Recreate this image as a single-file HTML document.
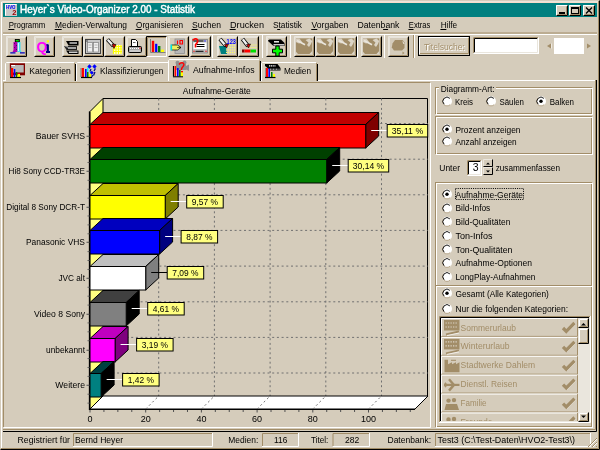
<!DOCTYPE html>
<html><head><meta charset="utf-8"><style>html,body{margin:0;padding:0;background:#D5CCBB;overflow:hidden}svg{display:block;will-change:transform}text{font-family:"Liberation Sans",sans-serif}</style></head>
<body><svg width="600" height="450" viewBox="0 0 600 450" font-family="Liberation Sans, sans-serif">
<rect x="0" y="0" width="600" height="450" fill="#D5CCBB" />
<path d="M1.5,449V2H598" stroke="#FFFFFF" fill="none"/>
<path d="M2,2.5H598" stroke="#F6DECB" fill="none"/>
<path d="M.5,449.5H599.5V.5" stroke="#000000" fill="none"/>
<path d="M1,448.5H598.5V1" stroke="#A28D68" fill="none"/>
<rect x="3" y="3" width="594" height="14" fill="#008080" />
<rect x="5" y="4" width="12" height="12" fill="#C8C8C8" />
<path d="M5.5,15.5V4.5H16.5" stroke="#fff" fill="none"/>
<text x="6" y="8.7" font-size="5" fill="#0000FF" text-anchor="start" font-weight="bold" textLength="9.5" lengthAdjust="spacingAndGlyphs" >HVO</text>
<text x="12.3" y="15.3" font-size="7.5" fill="#A00000" text-anchor="start" font-weight="bold" >2</text>
<text x="20" y="12.8" font-size="10.5" fill="#fff" text-anchor="start" font-weight="normal" textLength="175" lengthAdjust="spacingAndGlyphs" stroke="#fff" stroke-width=".45">Heyer`s Video-Organizer 2.00 - Statistik</text>
<rect x="556" y="5" width="12" height="11" fill="#D5CCBB" />
<path d="M556.5,15.5V5.5H567.5" stroke="#FFFFFF" fill="none"/>
<path d="M556.5,15.5H567.5V5.5" stroke="#000000" fill="none"/>
<path d="M557.5,14.5H566.5V6.5" stroke="#A28D68" fill="none"/>
<rect x="559" y="12" width="6" height="2" fill="#000000" />
<rect x="569" y="5" width="12" height="11" fill="#D5CCBB" />
<path d="M569.5,15.5V5.5H580.5" stroke="#FFFFFF" fill="none"/>
<path d="M569.5,15.5H580.5V5.5" stroke="#000000" fill="none"/>
<path d="M570.5,14.5H579.5V6.5" stroke="#A28D68" fill="none"/>
<rect x="571.5" y="7.5" width="7" height="6" stroke="#000" fill="none"/>
<rect x="571" y="7" width="8" height="2" fill="#000000" />
<rect x="583" y="5" width="12" height="11" fill="#D5CCBB" />
<path d="M583.5,15.5V5.5H594.5" stroke="#FFFFFF" fill="none"/>
<path d="M583.5,15.5H594.5V5.5" stroke="#000000" fill="none"/>
<path d="M584.5,14.5H593.5V6.5" stroke="#A28D68" fill="none"/>
<path d="M586,7.5L592,13.5M592,7.5L586,13.5" stroke="#000" stroke-width="1.4" fill="none"/>
<text x="8.7" y="28.3" font-size="9.5" fill="#000" text-anchor="start" font-weight="normal" textLength="36.6" lengthAdjust="spacingAndGlyphs" >Programm</text>
<line x1="8.399999999999999" y1="29.5" x2="14.399999999999999" y2="29.5" stroke="#000" stroke-width="1" />
<text x="55" y="28.3" font-size="9.5" fill="#000" text-anchor="start" font-weight="normal" textLength="72" lengthAdjust="spacingAndGlyphs" >Medien-Verwaltung</text>
<line x1="54.7" y1="29.5" x2="61.7" y2="29.5" stroke="#000" stroke-width="1" />
<text x="136" y="28.3" font-size="9.5" fill="#000" text-anchor="start" font-weight="normal" textLength="47" lengthAdjust="spacingAndGlyphs" >Organisieren</text>
<line x1="135.7" y1="29.5" x2="141.7" y2="29.5" stroke="#000" stroke-width="1" />
<text x="192" y="28.3" font-size="9.5" fill="#000" text-anchor="start" font-weight="normal" textLength="29" lengthAdjust="spacingAndGlyphs" >Suchen</text>
<line x1="191.7" y1="29.5" x2="197.7" y2="29.5" stroke="#000" stroke-width="1" />
<text x="230" y="28.3" font-size="9.5" fill="#000" text-anchor="start" font-weight="normal" textLength="34" lengthAdjust="spacingAndGlyphs" >Drucken</text>
<line x1="229.7" y1="29.5" x2="235.7" y2="29.5" stroke="#000" stroke-width="1" />
<text x="273" y="28.3" font-size="9.5" fill="#000" text-anchor="start" font-weight="normal" textLength="29" lengthAdjust="spacingAndGlyphs" >Statistik</text>
<line x1="277.2" y1="29.5" x2="280.2" y2="29.5" stroke="#000" stroke-width="1" />
<text x="311.6" y="28.3" font-size="9.5" fill="#000" text-anchor="start" font-weight="normal" textLength="36.7" lengthAdjust="spacingAndGlyphs" >Vorgaben</text>
<line x1="311.3" y1="29.5" x2="317.3" y2="29.5" stroke="#000" stroke-width="1" />
<text x="357.4" y="28.3" font-size="9.5" fill="#000" text-anchor="start" font-weight="normal" textLength="42" lengthAdjust="spacingAndGlyphs" >Datenbank</text>
<line x1="383.09999999999997" y1="29.5" x2="388.09999999999997" y2="29.5" stroke="#000" stroke-width="1" />
<text x="408.8" y="28.3" font-size="9.5" fill="#000" text-anchor="start" font-weight="normal" textLength="21.6" lengthAdjust="spacingAndGlyphs" >Extras</text>
<line x1="408.5" y1="29.5" x2="413.5" y2="29.5" stroke="#000" stroke-width="1" />
<text x="440.7" y="28.3" font-size="9.5" fill="#000" text-anchor="start" font-weight="normal" textLength="16.5" lengthAdjust="spacingAndGlyphs" >Hilfe</text>
<line x1="440.4" y1="29.5" x2="446.4" y2="29.5" stroke="#000" stroke-width="1" />
<line x1="3" y1="33" x2="597" y2="33" stroke="#A28D68" stroke-width="1" />
<line x1="3" y1="34.5" x2="597" y2="34.5" stroke="#FFFFFF" stroke-width="1" />
<rect x="6" y="36" width="21" height="21" fill="#D5CCBB" />
<path d="M6.5,56.5V36.5H26.5" stroke="#EAE6DD" fill="none"/>
<path d="M7.5,55.5V37.5H25.5" stroke="#F4F2EE" fill="none" opacity=".6"/>
<path d="M6.5,56.5H26.5V36.5" stroke="#000000" fill="none"/>
<path d="M7.5,55.5H25.5V37.5" stroke="#A28D68" fill="none"/>
<rect x="34" y="36" width="21" height="21" fill="#D5CCBB" />
<path d="M34.5,56.5V36.5H54.5" stroke="#EAE6DD" fill="none"/>
<path d="M35.5,55.5V37.5H53.5" stroke="#F4F2EE" fill="none" opacity=".6"/>
<path d="M34.5,56.5H54.5V36.5" stroke="#000000" fill="none"/>
<path d="M35.5,55.5H53.5V37.5" stroke="#A28D68" fill="none"/>
<rect x="62" y="36" width="21" height="21" fill="#D5CCBB" />
<path d="M62.5,56.5V36.5H82.5" stroke="#EAE6DD" fill="none"/>
<path d="M63.5,55.5V37.5H81.5" stroke="#F4F2EE" fill="none" opacity=".6"/>
<path d="M62.5,56.5H82.5V36.5" stroke="#000000" fill="none"/>
<path d="M63.5,55.5H81.5V37.5" stroke="#A28D68" fill="none"/>
<rect x="83" y="36" width="21" height="21" fill="#D5CCBB" />
<path d="M83.5,56.5V36.5H103.5" stroke="#EAE6DD" fill="none"/>
<path d="M84.5,55.5V37.5H102.5" stroke="#F4F2EE" fill="none" opacity=".6"/>
<path d="M83.5,56.5H103.5V36.5" stroke="#000000" fill="none"/>
<path d="M84.5,55.5H102.5V37.5" stroke="#A28D68" fill="none"/>
<rect x="104" y="36" width="21" height="21" fill="#D5CCBB" />
<path d="M104.5,56.5V36.5H124.5" stroke="#EAE6DD" fill="none"/>
<path d="M105.5,55.5V37.5H123.5" stroke="#F4F2EE" fill="none" opacity=".6"/>
<path d="M104.5,56.5H124.5V36.5" stroke="#000000" fill="none"/>
<path d="M105.5,55.5H123.5V37.5" stroke="#A28D68" fill="none"/>
<rect x="126" y="36" width="21" height="21" fill="#D5CCBB" />
<path d="M126.5,56.5V36.5H146.5" stroke="#EAE6DD" fill="none"/>
<path d="M127.5,55.5V37.5H145.5" stroke="#F4F2EE" fill="none" opacity=".6"/>
<path d="M126.5,56.5H146.5V36.5" stroke="#000000" fill="none"/>
<path d="M127.5,55.5H145.5V37.5" stroke="#A28D68" fill="none"/>
<rect x="146" y="36" width="21" height="21" fill="#D5CCBB" />
<path d="M146.5,57V36.5H167" stroke="#000000" fill="none"/>
<path d="M147.5,56V37.5H166" stroke="#A28D68" fill="none"/>
<path d="M146.5,56.5H166.5V36.5" stroke="#FFFFFF" fill="none"/>
<rect x="168" y="36" width="21" height="21" fill="#D5CCBB" />
<path d="M168.5,56.5V36.5H188.5" stroke="#EAE6DD" fill="none"/>
<path d="M169.5,55.5V37.5H187.5" stroke="#F4F2EE" fill="none" opacity=".6"/>
<path d="M168.5,56.5H188.5V36.5" stroke="#000000" fill="none"/>
<path d="M169.5,55.5H187.5V37.5" stroke="#A28D68" fill="none"/>
<rect x="190" y="36" width="21" height="21" fill="#D5CCBB" />
<path d="M190.5,56.5V36.5H210.5" stroke="#EAE6DD" fill="none"/>
<path d="M191.5,55.5V37.5H209.5" stroke="#F4F2EE" fill="none" opacity=".6"/>
<path d="M190.5,56.5H210.5V36.5" stroke="#000000" fill="none"/>
<path d="M191.5,55.5H209.5V37.5" stroke="#A28D68" fill="none"/>
<rect x="217" y="36" width="21" height="21" fill="#D5CCBB" />
<path d="M217.5,56.5V36.5H237.5" stroke="#EAE6DD" fill="none"/>
<path d="M218.5,55.5V37.5H236.5" stroke="#F4F2EE" fill="none" opacity=".6"/>
<path d="M217.5,56.5H237.5V36.5" stroke="#000000" fill="none"/>
<path d="M218.5,55.5H236.5V37.5" stroke="#A28D68" fill="none"/>
<rect x="238" y="36" width="21" height="21" fill="#D5CCBB" />
<path d="M238.5,56.5V36.5H258.5" stroke="#EAE6DD" fill="none"/>
<path d="M239.5,55.5V37.5H257.5" stroke="#F4F2EE" fill="none" opacity=".6"/>
<path d="M238.5,56.5H258.5V36.5" stroke="#000000" fill="none"/>
<path d="M239.5,55.5H257.5V37.5" stroke="#A28D68" fill="none"/>
<rect x="266" y="36" width="21" height="21" fill="#D5CCBB" />
<path d="M266.5,56.5V36.5H286.5" stroke="#EAE6DD" fill="none"/>
<path d="M267.5,55.5V37.5H285.5" stroke="#F4F2EE" fill="none" opacity=".6"/>
<path d="M266.5,56.5H286.5V36.5" stroke="#000000" fill="none"/>
<path d="M267.5,55.5H285.5V37.5" stroke="#A28D68" fill="none"/>
<rect x="294" y="36" width="21" height="21" fill="#D5CCBB" />
<path d="M294.5,56.5V36.5H314.5" stroke="#EAE6DD" fill="none"/>
<path d="M295.5,55.5V37.5H313.5" stroke="#F4F2EE" fill="none" opacity=".6"/>
<path d="M294.5,56.5H314.5V36.5" stroke="#000000" fill="none"/>
<path d="M295.5,55.5H313.5V37.5" stroke="#A28D68" fill="none"/>
<rect x="315" y="36" width="21" height="21" fill="#D5CCBB" />
<path d="M315.5,56.5V36.5H335.5" stroke="#EAE6DD" fill="none"/>
<path d="M316.5,55.5V37.5H334.5" stroke="#F4F2EE" fill="none" opacity=".6"/>
<path d="M315.5,56.5H335.5V36.5" stroke="#000000" fill="none"/>
<path d="M316.5,55.5H334.5V37.5" stroke="#A28D68" fill="none"/>
<rect x="336" y="36" width="21" height="21" fill="#D5CCBB" />
<path d="M336.5,56.5V36.5H356.5" stroke="#EAE6DD" fill="none"/>
<path d="M337.5,55.5V37.5H355.5" stroke="#F4F2EE" fill="none" opacity=".6"/>
<path d="M336.5,56.5H356.5V36.5" stroke="#000000" fill="none"/>
<path d="M337.5,55.5H355.5V37.5" stroke="#A28D68" fill="none"/>
<rect x="361" y="36" width="21" height="21" fill="#D5CCBB" />
<path d="M361.5,56.5V36.5H381.5" stroke="#EAE6DD" fill="none"/>
<path d="M362.5,55.5V37.5H380.5" stroke="#F4F2EE" fill="none" opacity=".6"/>
<path d="M361.5,56.5H381.5V36.5" stroke="#000000" fill="none"/>
<path d="M362.5,55.5H380.5V37.5" stroke="#A28D68" fill="none"/>
<rect x="388" y="36" width="21" height="21" fill="#D5CCBB" />
<path d="M388.5,56.5V36.5H408.5" stroke="#EAE6DD" fill="none"/>
<path d="M389.5,55.5V37.5H407.5" stroke="#F4F2EE" fill="none" opacity=".6"/>
<path d="M388.5,56.5H408.5V36.5" stroke="#000000" fill="none"/>
<path d="M389.5,55.5H407.5V37.5" stroke="#A28D68" fill="none"/>
<g transform="translate(6,36)"><rect x="9.3" y="3.5" width="4" height="2.4" fill="#00E000" stroke="#000" stroke-width=".9"/><path d="M7.5,6H11.5V16H6.5L7.5,14Z" fill="#B000B0"/><path d="M8,7h1v1h-1zM10,9h1v1h-1zM8,11h1v1h-1zM10,13h1v1h-1z" fill="#600060"/><path d="M11.5,6H14.5L14.5,14L15.5,16H11.5Z" fill="#40E0F0"/><path d="M12.5,7V15" stroke="#fff" stroke-width=".8"/><path d="M4.3,16.8H9.5M14,16.8H18.8" stroke="#0000C0" stroke-width="1.3"/></g>
<g transform="translate(34,36)"><text x="2.6" y="16" font-size="14.5" font-family="Liberation Serif" font-weight="bold" fill="#FF00FF" textLength="11" lengthAdjust="spacingAndGlyphs">Q</text><path d="M13.8,8.5V15.8M12,16H16" stroke="#000080" stroke-width="2.2"/><path d="M12.3,8.8H14" stroke="#000080" stroke-width="1.2"/><rect x="12.8" y="4.3" width="2.2" height="2" fill="#FFFF00"/></g>
<g transform="translate(62,36)"><path d="M4,5H16.5V9.5H6.5Z" fill="#000"/><path d="M7.5,7H15" stroke="#fff" stroke-width="1.2"/><path d="M2,10H15V14H4.5Z" fill="#202020"/><path d="M2,10H6V12Z" fill="#909090"/><path d="M6,12H14" stroke="#fff" stroke-width="1.2"/><path d="M4,14.5H16.5V18H6.5Z" fill="#000"/><path d="M7,16.2H15.5" stroke="#fff" stroke-width="1.2"/></g>
<g transform="translate(83,36)"><rect x="2.5" y="3.5" width="15" height="14" fill="#C8C8C8" stroke="#404040" stroke-width="1"/><path d="M3,5H5M6,3.5H15" stroke="#404040" stroke-width="1"/><rect x="4.5" y="6.5" width="5" height="9.5" fill="#F0F0F0" stroke="#808080" stroke-width=".7"/><rect x="10.5" y="6.5" width="5" height="9.5" fill="#F0F0F0" stroke="#808080" stroke-width=".7"/><path d="M5.5,9H8.5M5.5,11.5H8.5M11.5,9H14.5M11.5,11.5H14.5" stroke="#909090" stroke-width=".6"/></g>
<g transform="translate(104,36)"><rect x="9" y="9" width="9" height="9" fill="#FFFFE0"/><path d="M9.5,9V18M12,9V18M14.5,9V18M17,9V18M9,10.5H18M9,13H18M9,15.5H18" stroke="#FFFF00" stroke-width="1.2"/><path d="M3.5,3.5L9.5,10" stroke="#000" stroke-width="4"/><path d="M3.8,3.8L9,9.5" stroke="#F0F0F0" stroke-width="2.4"/><path d="M8,8L12,8.5L10,12.5Z" fill="#E00000" stroke="#000" stroke-width=".6"/></g>
<g transform="translate(125,36)"><path d="M6.5,3.5H10.5L12.5,5.5V10.5H6.5Z" fill="#fff" stroke="#000" stroke-width="1"/><path d="M8,6.5H10.5" stroke="#000" stroke-width=".6"/><rect x="3.5" y="10.5" width="13" height="6" rx="1" fill="#A8A8A8" stroke="#000" stroke-width="1"/><path d="M5,12.5H15" stroke="#fff" stroke-width="1" stroke-dasharray="1 1"/><path d="M5,15H15" stroke="#fff" stroke-width=".8"/><rect x="14.5" y="11.5" width="1.2" height="1.2" fill="#FF0000"/></g>
<g transform="translate(147,36)"><path d="M3.5,3V16.5H18.5" stroke="#808080" stroke-width="1" fill="none"/><rect x="4.8" y="4.8" width="2.4" height="11.2" fill="#FF0000"/><rect x="8.1" y="7.8" width="2.2" height="8.2" fill="#0000FF"/><rect x="11" y="10" width="2.4" height="6" fill="#008000"/><rect x="14" y="13.6" width="3" height="2.4" fill="#FFFF00"/></g>
<g transform="translate(168,36)"><rect x="7" y="3" width="9.5" height="14.5" fill="#B8B8B8" stroke="#909090" stroke-width=".8"/><path d="M9.5,4.5V8M12,4.5H14.5V8H12Z" stroke="#FF0000" stroke-width="1.2" fill="none"/><path d="M3.5,9H9.5L13,11.5L9.5,14H3.5Z" fill="#F0F060" stroke="#000" stroke-width=".7"/><rect x="2.5" y="8.5" width="1.6" height="6" fill="#00E0E0"/><path d="M9,11.5H13" stroke="#000" stroke-width=".6"/></g>
<g transform="translate(189.5,36)"><rect x="3" y="3.5" width="15" height="13.5" fill="#C0C0C0" stroke="#808080" stroke-width=".8"/><rect x="4" y="6.5" width="13" height="6.5" fill="#fff"/><path d="M4,5H14M7,8.5H15M7,10.5H15M6,15.3H14" stroke="#000" stroke-width="1"/><circle cx="15.5" cy="5" r=".7" fill="#0000FF"/><circle cx="16.5" cy="15.3" r=".7" fill="#FF0000"/><circle cx="4.5" cy="15.3" r=".7" fill="#FF0000"/><path d="M3.3,4.5Q6,1.5 8,3.8Q9,6 6,8.5V11.5" stroke="#FF0000" stroke-width="1.6" fill="none"/></g>
<line x1="212.5" y1="35" x2="212.5" y2="58" stroke="#FFFFFF" stroke-width="1" />
<g transform="translate(217,36)"><path d="M2,10H9L10,18H4Z" fill="#008080"/><path d="M9,9H18M9,11.5H18M9,14H18M9,16.5H18" stroke="#FFFF60" stroke-width="1.1" stroke-dasharray="1 1"/><path d="M3,3L9,10" stroke="#000" stroke-width="4"/><path d="M3.3,3.3L8.5,9.5" stroke="#F0F0F0" stroke-width="2.4"/><path d="M7.5,8.5L11.5,8L9.5,12Z" fill="#E00000" stroke="#000" stroke-width=".6"/><text x="9.5" y="8" font-size="7" fill="#0000FF" font-weight="bold" textLength="9.5" lengthAdjust="spacingAndGlyphs">123</text></g>
<g transform="translate(238.5,36)"><path d="M10,9H18.5M10,11.5H18.5" stroke="#FFFF60" stroke-width="1.1" stroke-dasharray="1 1"/><rect x="3.5" y="13.5" width="2.5" height="3" fill="#800000"/><rect x="6" y="13.5" width="6" height="3" fill="#FF0000"/><rect x="12" y="13.5" width="5.5" height="3" fill="#00E000"/><path d="M4,3L9.5,10" stroke="#000" stroke-width="4"/><path d="M4.3,3.3L9,9.5" stroke="#F0F0F0" stroke-width="2.4"/><path d="M8,8.5L12,8L10,12Z" fill="#E00000" stroke="#000" stroke-width=".6"/></g>
<line x1="262.5" y1="35" x2="262.5" y2="58" stroke="#FFFFFF" stroke-width="1" />
<g transform="translate(266,36)"><path d="M2,4.5L3.5,3.5H15L18.5,7V10H7.5L2,5Z" fill="#000"/><path d="M8,5.8H13" stroke="#fff" stroke-width="1.4"/><path d="M7.5,8.8H18" stroke="#E0E0E0" stroke-width="1.4"/><path d="M9.8,10H13.2V13.2H16.5V16.8H13.2V20H9.8V16.8H6.5V13.2H9.8Z" fill="#00FF00" stroke="#000" stroke-width="1"/></g>
<line x1="290.5" y1="35" x2="290.5" y2="58" stroke="#FFFFFF" stroke-width="1" />
<g transform="translate(294,36)"><rect x="1.8" y="2.4" width="16.4" height="15.6" fill="#A28D68"/><path d="M1.8,2.4H5.5L8.5,6.5L5,7.5L1.8,6Z" fill="#EAE6DD" opacity=".75"/><path d="M3,4.5L11,8.8" stroke="#EAE6DD" stroke-width="1.6"/><path d="M11.5,4L15.5,2.4L18.2,5L17,8L15,11L13,9L14.5,6.5Z" fill="#EAE6DD" opacity=".8"/><path d="M1.8,18V15.5L4,18ZM18.2,18V15L15.5,18Z" fill="#EAE6DD" opacity=".8"/></g>
<g transform="translate(315,36)"><rect x="1.8" y="2.4" width="16.4" height="15.6" fill="#A28D68"/><path d="M1.8,2.4H5.5L8.5,6.5L5,7.5L1.8,6Z" fill="#EAE6DD" opacity=".75"/><path d="M3,4.5L11,8.8" stroke="#EAE6DD" stroke-width="1.6"/><path d="M11.5,4L15.5,2.4L18.2,5L17,8L15,11L13,9L14.5,6.5Z" fill="#EAE6DD" opacity=".8"/><path d="M1.8,18V15.5L4,18ZM18.2,18V15L15.5,18Z" fill="#EAE6DD" opacity=".8"/></g>
<g transform="translate(336,36)"><rect x="1.8" y="2.4" width="16.4" height="15.6" fill="#A28D68"/><path d="M1.8,2.4H5.5L8.5,6.5L5,7.5L1.8,6Z" fill="#EAE6DD" opacity=".75"/><path d="M3,4.5L11,8.8" stroke="#EAE6DD" stroke-width="1.6"/><path d="M11.5,4L15.5,2.4L18.2,5L17,8L15,11L13,9L14.5,6.5Z" fill="#EAE6DD" opacity=".8"/><path d="M1.8,18V15.5L4,18ZM18.2,18V15L15.5,18Z" fill="#EAE6DD" opacity=".8"/></g>
<g transform="translate(361,36)"><rect x="1.8" y="2.4" width="16.4" height="15.6" fill="#A28D68"/><path d="M1.8,2.4H5.5L8.5,6.5L5,7.5L1.8,6Z" fill="#EAE6DD" opacity=".75"/><path d="M3,4.5L11,8.8" stroke="#EAE6DD" stroke-width="1.6"/><path d="M11.5,4L15.5,2.4L18.2,5L17,8L15,11L13,9L14.5,6.5Z" fill="#EAE6DD" opacity=".8"/><path d="M1.8,18V15.5L4,18ZM18.2,18V15L15.5,18Z" fill="#EAE6DD" opacity=".8"/></g>
<line x1="357.5" y1="35" x2="357.5" y2="58" stroke="#FFFFFF" stroke-width="1" />
<line x1="384.5" y1="35" x2="384.5" y2="58" stroke="#FFFFFF" stroke-width="1" />
<g transform="translate(388,36)"><path d="M7,4H14.5L16.5,6.5V12L14,14.5H6L3.8,11.5L4.5,7.5Z" fill="#A28D68"/><path d="M14.5,15.5L16.5,17L14.5,18.5Z" fill="#A28D68"/><path d="M14.8,5.5L16,8" stroke="#EAE6DD" stroke-width="1"/></g>
<line x1="413.5" y1="35" x2="413.5" y2="58" stroke="#A28D68" stroke-width="1" />
<line x1="414.5" y1="35" x2="414.5" y2="58" stroke="#FFFFFF" stroke-width="1" />
<rect x="418" y="36" width="52" height="20" fill="#000000" />
<rect x="419" y="37" width="50" height="18" fill="#D5CCBB" />
<path d="M419.5,54V37.5H468" stroke="#FFFFFF" fill="none"/>
<path d="M420,53.5H468.5V38" stroke="#A28D68" fill="none"/>
<text x="425" y="50.5" font-size="9.5" fill="#FFFFFF" text-anchor="start" font-weight="normal" textLength="41" lengthAdjust="spacingAndGlyphs" >Titelsuche:</text>
<text x="424" y="49.5" font-size="9.5" fill="#A28D68" text-anchor="start" font-weight="normal" textLength="41" lengthAdjust="spacingAndGlyphs" >Titelsuche:</text>
<rect x="473" y="37" width="66" height="17" fill="#FFFFFF" />
<path d="M473.5,53.5V37.5H538.5" stroke="#A28D68" fill="none"/>
<path d="M473.5,53.5H538.5V37.5" stroke="#FFFFFF" fill="none"/>
<path d="M474.5,52.5V38.5H537.5" stroke="#000000" fill="none"/>
<path d="M474.5,52.5H537.5V38.5" stroke="#EAE6DD" fill="none"/>
<path d="M551,43.5L547,46L551,48.5Z" fill="#A28D68"/><path d="M551.5,43.5V48.5" stroke="#fff" stroke-width=".6"/>
<path d="M587,43.5L591,46L587,48.5Z" fill="#A28D68"/>
<rect x="554" y="38" width="30" height="16" fill="#FFFFFF" />
<path d="M3,80.5H596" stroke="#FFFFFF" fill="none"/>
<rect x="5" y="62" width="71" height="19" fill="#D5CCBB" />
<path d="M5.5,81V63.5L6.5,62.5H74" stroke="#FFFFFF" fill="none"/>
<path d="M74.5,63V81" stroke="#A28D68" fill="none"/>
<path d="M75.5,64V81" stroke="#000000" fill="none"/>
<text x="29.3" y="74" font-size="9.5" fill="#000" text-anchor="start" font-weight="normal" textLength="41.4" lengthAdjust="spacingAndGlyphs" >Kategorien</text>
<rect x="9.8" y="63.3" width="15.2" height="12" fill="#800000"/><rect x="11.2" y="65" width="12.5" height="7.5" fill="#B8B8B8"/><path d="M11.2,65.5H15" stroke="#fff" stroke-width="1"/><rect x="10" y="68" width="1" height="9" fill="#404040"/><rect x="11" y="68" width="2.2" height="9" fill="#FF0000"/><rect x="13.8" y="69" width="1.5" height="8" fill="#0000FF"/><rect x="16" y="72" width="1.3" height="5" fill="#008000"/><rect x="17.6" y="74" width="2.4" height="3" fill="#FFFF00"/><rect x="17.6" y="73" width="2.4" height="1" fill="#E00000"/><path d="M10,77.5H21" stroke="#000" stroke-width="1.2"/>
<rect x="76" y="62" width="94" height="19" fill="#D5CCBB" />
<path d="M76.5,81V63.5L77.5,62.5H168" stroke="#FFFFFF" fill="none"/>
<path d="M168.5,63V81" stroke="#A28D68" fill="none"/>
<path d="M169.5,64V81" stroke="#000000" fill="none"/>
<text x="100" y="74" font-size="9.5" fill="#000" text-anchor="start" font-weight="normal" textLength="63.5" lengthAdjust="spacingAndGlyphs" >Klassifizierungen</text>
<rect x="80.4" y="68" width="1.1" height="9" fill="#808080"/><rect x="81.7" y="68" width="2.3" height="9" fill="#FF0000"/><rect x="85" y="69" width="1.6" height="8" fill="#0000FF"/><rect x="87" y="67.5" width="1.4" height="4.5" fill="#00FFFF"/><rect x="87" y="72" width="1.5" height="5" fill="#008000"/><rect x="89" y="74" width="2" height="3" fill="#FFFF00"/><path d="M81,77.5H92" stroke="#000" stroke-width="1.2"/><path d="M89.5,64.3L91.7,66.5L89.5,68.7L87.3,66.5Z M94.5,64.3L96.7,66.5L94.5,68.7L92.3,66.5Z M91.8,70.8L93.8,72.8L91.8,74.8L89.8,72.8Z" fill="#0000FF"/><path d="M91,69L90,71.5M95.5,68.5L94,71M95,72L93.5,75.5M92.5,75L91.8,77" stroke="#000080" stroke-width="1.2"/>
<rect x="261" y="62" width="57" height="19" fill="#D5CCBB" />
<path d="M261.5,81V63.5L262.5,62.5H316" stroke="#FFFFFF" fill="none"/>
<path d="M316.5,63V81" stroke="#A28D68" fill="none"/>
<path d="M317.5,64V81" stroke="#000000" fill="none"/>
<text x="284" y="74" font-size="9.5" fill="#000" text-anchor="start" font-weight="normal" textLength="27" lengthAdjust="spacingAndGlyphs" >Medien</text>
<path d="M265,64H277.5L280.5,68V70.5H270.5L265,66Z" fill="#000"/><path d="M269,65.8H275.5" stroke="#fff" stroke-width="1.2" stroke-dasharray="1.2 .6"/><path d="M270,69.2H279.5" stroke="#E0E0E0" stroke-width="1" stroke-dasharray="1 .5"/><rect x="265" y="68" width="1" height="9" fill="#909090"/><rect x="266" y="68" width="2" height="9" fill="#FF0000"/><rect x="268.4" y="68.5" width="1.6" height="8.5" fill="#0000FF"/><rect x="271" y="72" width="1.5" height="5" fill="#008000"/><rect x="273" y="74" width="2" height="3" fill="#FFFF00"/><path d="M265,77.5H275.5" stroke="#000" stroke-width="1.2"/>
<rect x="168" y="59" width="93" height="23" fill="#D5CCBB" />
<path d="M168.5,81V60.5L169.5,59.5H259" stroke="#FFFFFF" fill="none"/>
<path d="M259.5,60.5V81" stroke="#A28D68" fill="none"/>
<path d="M260.5,61V81" stroke="#000000" fill="none"/>
<text x="193" y="73" font-size="9.5" fill="#000" text-anchor="start" font-weight="normal" textLength="61.5" lengthAdjust="spacingAndGlyphs" >Aufnahme-Infos</text>
<circle cx="177.5" cy="62.8" r="2" fill="#909090"/><circle cx="184.5" cy="62.5" r="2" fill="#909090"/><rect x="176" y="62.5" width="10" height="7.5" fill="#909090"/><path d="M186,66L189,64.5V71L186,69.5Z" fill="#909090"/><rect x="172.9" y="66" width="1.1" height="10.5" fill="#000"/><rect x="174.5" y="66" width="1.6" height="10.5" fill="#FF0000"/><rect x="177" y="68" width="1.6" height="8.5" fill="#0000FF"/><rect x="179" y="70" width="1.6" height="6.5" fill="#008000"/><rect x="181" y="71" width="2" height="5.5" fill="#FFFF00"/><rect x="181" y="71" width="2" height="1.3" fill="#FF0000"/><path d="M173,76.8H183" stroke="#000" stroke-width="1"/><path d="M179,64.5Q180.5,62.3 183,63Q184.8,64.3 183,66.5Q181.5,68 181.3,70" stroke="#FF0000" stroke-width="1.4" fill="none"/>
<line x1="169" y1="80.5" x2="259" y2="80.5" stroke="#D5CCBB" stroke-width="1" />
<path d="M3,429.5H595.5V80" stroke="#A28D68" fill="none"/>
<path d="M3,431.5H596.5V80" stroke="#000000" fill="none"/>
<path d="M3.5,427V82.5H431" stroke="#A28D68" fill="none"/>
<path d="M3.5,427.5H430.5V82.5" stroke="#FFFFFF" fill="none"/>
<text x="216.8" y="94" font-size="9" fill="#000" text-anchor="middle" font-weight="normal" textLength="68" lengthAdjust="spacingAndGlyphs" >Aufnahme-Geräte</text>
<path d="M103.0,98.5H427.5V396.0" stroke="#000" fill="none" stroke-width="1"/>
<line x1="158.7" y1="98.5" x2="158.7" y2="396.0" stroke="#707070" stroke-width="1" stroke-dasharray="2 2.7"/>
<line x1="214.4" y1="98.5" x2="214.4" y2="396.0" stroke="#707070" stroke-width="1" stroke-dasharray="2 2.7"/>
<line x1="270.1" y1="98.5" x2="270.1" y2="396.0" stroke="#707070" stroke-width="1" stroke-dasharray="2 2.7"/>
<line x1="325.8" y1="98.5" x2="325.8" y2="396.0" stroke="#707070" stroke-width="1" stroke-dasharray="2 2.7"/>
<line x1="381.5" y1="98.5" x2="381.5" y2="396.0" stroke="#707070" stroke-width="1" stroke-dasharray="2 2.7"/>
<line x1="103.0" y1="123.5" x2="428.0" y2="123.5" stroke="#707070" stroke-width="1" stroke-dasharray="2 2.7"/>
<line x1="103.0" y1="159.2" x2="428.0" y2="159.2" stroke="#707070" stroke-width="1" stroke-dasharray="2 2.7"/>
<line x1="103.0" y1="194.8" x2="428.0" y2="194.8" stroke="#707070" stroke-width="1" stroke-dasharray="2 2.7"/>
<line x1="103.0" y1="230.4" x2="428.0" y2="230.4" stroke="#707070" stroke-width="1" stroke-dasharray="2 2.7"/>
<line x1="103.0" y1="266.1" x2="428.0" y2="266.1" stroke="#707070" stroke-width="1" stroke-dasharray="2 2.7"/>
<line x1="103.0" y1="301.8" x2="428.0" y2="301.8" stroke="#707070" stroke-width="1" stroke-dasharray="2 2.7"/>
<line x1="103.0" y1="337.4" x2="428.0" y2="337.4" stroke="#707070" stroke-width="1" stroke-dasharray="2 2.7"/>
<line x1="103.0" y1="373.0" x2="428.0" y2="373.0" stroke="#707070" stroke-width="1" stroke-dasharray="2 2.7"/>
<path d="M90.0,409.0H415.0L428.0,396.0H103.0Z" fill="#fff" stroke="#000" stroke-width="1"/>
<line x1="90.0" y1="409.5" x2="415.0" y2="409.5" stroke="#000" stroke-width="1" />
<line x1="145.7" y1="409.0" x2="158.7" y2="396.0" stroke="#707070" stroke-width="1" stroke-dasharray="2 2.7"/>
<line x1="201.4" y1="409.0" x2="214.4" y2="396.0" stroke="#707070" stroke-width="1" stroke-dasharray="2 2.7"/>
<line x1="257.1" y1="409.0" x2="270.1" y2="396.0" stroke="#707070" stroke-width="1" stroke-dasharray="2 2.7"/>
<line x1="312.8" y1="409.0" x2="325.8" y2="396.0" stroke="#707070" stroke-width="1" stroke-dasharray="2 2.7"/>
<line x1="368.5" y1="409.0" x2="381.5" y2="396.0" stroke="#707070" stroke-width="1" stroke-dasharray="2 2.7"/>
<path d="M90.0,409.0V111.5L103.0,98.5V396.0Z" fill="#FFFF80" stroke="#000" stroke-width="1"/>
<line x1="89.5" y1="111.5" x2="89.5" y2="410.0" stroke="#000" stroke-width="1.3" />
<path d="M90.0,124.5H365.7L378.7,112.5H103.0Z" fill="#BF0000" stroke="#000" stroke-width="1" stroke-linejoin="round"/>
<path d="M365.7,124.5L378.7,112.5V136.0L365.7,148.0Z" fill="#7F0000" stroke="#000" stroke-width="1" stroke-linejoin="round"/>
<rect x="90.0" y="124.5" width="275.7" height="23.5" fill="#FF0000" stroke="#000" stroke-width="1"/>
<line x1="86.5" y1="136.25" x2="89.5" y2="136.25" stroke="#505050" stroke-width="1" />
<text x="85" y="139.45" font-size="9" fill="#000" text-anchor="end" font-weight="normal" textLength="49.2" lengthAdjust="spacingAndGlyphs" >Bauer SVHS</text>
<path d="M90.0,159.5H326.7L339.7,147.5H103.0Z" fill="#004000" stroke="#000" stroke-width="1" stroke-linejoin="round"/>
<path d="M326.7,159.5L339.7,147.5V171.0L326.7,183.0Z" fill="#000000" stroke="#000" stroke-width="1" stroke-linejoin="round"/>
<rect x="90.0" y="159.5" width="236.7" height="23.5" fill="#008000" stroke="#000" stroke-width="1"/>
<line x1="86.5" y1="171.25" x2="89.5" y2="171.25" stroke="#505050" stroke-width="1" />
<text x="85" y="174.45" font-size="9" fill="#000" text-anchor="end" font-weight="normal" textLength="76.4" lengthAdjust="spacingAndGlyphs" >Hi8 Sony CCD-TR3E</text>
<path d="M90.0,195.5H165.2L178.2,183.5H103.0Z" fill="#BFBF00" stroke="#000" stroke-width="1" stroke-linejoin="round"/>
<path d="M165.2,195.5L178.2,183.5V207.0L165.2,219.0Z" fill="#7F7F00" stroke="#000" stroke-width="1" stroke-linejoin="round"/>
<rect x="90.0" y="195.5" width="75.2" height="23.5" fill="#FFFF00" stroke="#000" stroke-width="1"/>
<line x1="86.5" y1="207.25" x2="89.5" y2="207.25" stroke="#505050" stroke-width="1" />
<text x="85" y="210.45" font-size="9" fill="#000" text-anchor="end" font-weight="normal" textLength="78.7" lengthAdjust="spacingAndGlyphs" >Digital 8 Sony DCR-T</text>
<path d="M90.0,230.5H159.6L172.6,218.5H103.0Z" fill="#0000BF" stroke="#000" stroke-width="1" stroke-linejoin="round"/>
<path d="M159.6,230.5L172.6,218.5V242.0L159.6,254.0Z" fill="#00007F" stroke="#000" stroke-width="1" stroke-linejoin="round"/>
<rect x="90.0" y="230.5" width="69.6" height="23.5" fill="#0000FF" stroke="#000" stroke-width="1"/>
<line x1="86.5" y1="242.25" x2="89.5" y2="242.25" stroke="#505050" stroke-width="1" />
<text x="85" y="245.45" font-size="9" fill="#000" text-anchor="end" font-weight="normal" textLength="59" lengthAdjust="spacingAndGlyphs" >Panasonic VHS</text>
<path d="M90.0,266.5H145.7L158.7,254.5H103.0Z" fill="#BFBFBF" stroke="#000" stroke-width="1" stroke-linejoin="round"/>
<path d="M145.7,266.5L158.7,254.5V278.0L145.7,290.0Z" fill="#7F7F7F" stroke="#000" stroke-width="1" stroke-linejoin="round"/>
<rect x="90.0" y="266.5" width="55.7" height="23.5" fill="#FFFFFF" stroke="#000" stroke-width="1"/>
<line x1="86.5" y1="278.25" x2="89.5" y2="278.25" stroke="#505050" stroke-width="1" />
<text x="85" y="281.45" font-size="9" fill="#000" text-anchor="end" font-weight="normal" textLength="26.6" lengthAdjust="spacingAndGlyphs" >JVC alt</text>
<path d="M90.0,302.5H126.2L139.2,290.5H103.0Z" fill="#404040" stroke="#000" stroke-width="1" stroke-linejoin="round"/>
<path d="M126.2,302.5L139.2,290.5V314.0L126.2,326.0Z" fill="#000000" stroke="#000" stroke-width="1" stroke-linejoin="round"/>
<rect x="90.0" y="302.5" width="36.2" height="23.5" fill="#808080" stroke="#000" stroke-width="1"/>
<line x1="86.5" y1="314.25" x2="89.5" y2="314.25" stroke="#505050" stroke-width="1" />
<text x="85" y="317.45" font-size="9" fill="#000" text-anchor="end" font-weight="normal" textLength="51" lengthAdjust="spacingAndGlyphs" >Video 8 Sony</text>
<path d="M90.0,338.5H115.1L128.1,326.5H103.0Z" fill="#BF00BF" stroke="#000" stroke-width="1" stroke-linejoin="round"/>
<path d="M115.1,338.5L128.1,326.5V350.0L115.1,362.0Z" fill="#7F007F" stroke="#000" stroke-width="1" stroke-linejoin="round"/>
<rect x="90.0" y="338.5" width="25.1" height="23.5" fill="#FF00FF" stroke="#000" stroke-width="1"/>
<line x1="86.5" y1="350.25" x2="89.5" y2="350.25" stroke="#505050" stroke-width="1" />
<text x="85" y="353.45" font-size="9" fill="#000" text-anchor="end" font-weight="normal" textLength="39" lengthAdjust="spacingAndGlyphs" >unbekannt</text>
<path d="M90.0,373.5H101.1L114.1,361.5H103.0Z" fill="#004040" stroke="#000" stroke-width="1" stroke-linejoin="round"/>
<path d="M101.1,373.5L114.1,361.5V385.0L101.1,397.0Z" fill="#000000" stroke="#000" stroke-width="1" stroke-linejoin="round"/>
<rect x="90.0" y="373.5" width="11.1" height="23.5" fill="#008080" stroke="#000" stroke-width="1"/>
<line x1="86.5" y1="385.25" x2="89.5" y2="385.25" stroke="#505050" stroke-width="1" />
<text x="85" y="388.45" font-size="9" fill="#000" text-anchor="end" font-weight="normal" textLength="29.7" lengthAdjust="spacingAndGlyphs" >Weitere</text>
<line x1="371.21500000000003" y1="130.5" x2="387.21500000000003" y2="130.5" stroke="#fff" stroke-width="1" />
<rect x="387.2" y="124.5" width="40.5" height="12.5" fill="#FFFF80" stroke="#000" stroke-width="1"/>
<text x="407.46500000000003" y="134.3" font-size="9" fill="#000" text-anchor="middle" font-weight="normal" textLength="31.4" lengthAdjust="spacingAndGlyphs" >35,11 %</text>
<line x1="332.225" y1="165.5" x2="348.225" y2="165.5" stroke="#fff" stroke-width="1" />
<rect x="348.2" y="159.5" width="40.5" height="12.5" fill="#FFFF80" stroke="#000" stroke-width="1"/>
<text x="368.475" y="169.3" font-size="9" fill="#000" text-anchor="middle" font-weight="normal" textLength="31.4" lengthAdjust="spacingAndGlyphs" >30,14 %</text>
<line x1="170.695" y1="201.5" x2="186.695" y2="201.5" stroke="#fff" stroke-width="1" />
<rect x="186.7" y="195.5" width="36.5" height="12.5" fill="#FFFF80" stroke="#000" stroke-width="1"/>
<text x="204.945" y="205.3" font-size="9" fill="#000" text-anchor="middle" font-weight="normal" textLength="26.2" lengthAdjust="spacingAndGlyphs" >9,57 %</text>
<line x1="165.125" y1="236.5" x2="181.125" y2="236.5" stroke="#fff" stroke-width="1" />
<rect x="181.1" y="230.5" width="36.5" height="12.5" fill="#FFFF80" stroke="#000" stroke-width="1"/>
<text x="199.375" y="240.3" font-size="9" fill="#000" text-anchor="middle" font-weight="normal" textLength="26.2" lengthAdjust="spacingAndGlyphs" >8,87 %</text>
<line x1="151.2" y1="272.5" x2="167.2" y2="272.5" stroke="#000" stroke-width="1" />
<rect x="167.2" y="266.5" width="36.5" height="12.5" fill="#FFFF80" stroke="#000" stroke-width="1"/>
<text x="185.45" y="276.3" font-size="9" fill="#000" text-anchor="middle" font-weight="normal" textLength="26.2" lengthAdjust="spacingAndGlyphs" >7,09 %</text>
<line x1="131.70499999999998" y1="308.5" x2="147.70499999999998" y2="308.5" stroke="#fff" stroke-width="1" />
<rect x="147.7" y="302.5" width="36.5" height="12.5" fill="#FFFF80" stroke="#000" stroke-width="1"/>
<text x="165.95499999999998" y="312.3" font-size="9" fill="#000" text-anchor="middle" font-weight="normal" textLength="26.2" lengthAdjust="spacingAndGlyphs" >4,61 %</text>
<line x1="120.565" y1="344.5" x2="136.565" y2="344.5" stroke="#fff" stroke-width="1" />
<rect x="136.6" y="338.5" width="36.5" height="12.5" fill="#FFFF80" stroke="#000" stroke-width="1"/>
<text x="154.815" y="348.3" font-size="9" fill="#000" text-anchor="middle" font-weight="normal" textLength="26.2" lengthAdjust="spacingAndGlyphs" >3,19 %</text>
<line x1="106.64" y1="379.5" x2="122.64" y2="379.5" stroke="#fff" stroke-width="1" />
<rect x="122.6" y="373.5" width="36.5" height="12.5" fill="#FFFF80" stroke="#000" stroke-width="1"/>
<text x="140.89" y="383.3" font-size="9" fill="#000" text-anchor="middle" font-weight="normal" textLength="26.2" lengthAdjust="spacingAndGlyphs" >1,42 %</text>
<line x1="87.5" y1="126.8375" x2="89.5" y2="126.8375" stroke="#606060" stroke-width="1" />
<line x1="87.5" y1="144.6625" x2="89.5" y2="144.6625" stroke="#606060" stroke-width="1" />
<line x1="87.5" y1="153.575" x2="89.5" y2="153.575" stroke="#606060" stroke-width="1" />
<line x1="87.5" y1="162.4875" x2="89.5" y2="162.4875" stroke="#606060" stroke-width="1" />
<line x1="87.5" y1="180.3125" x2="89.5" y2="180.3125" stroke="#606060" stroke-width="1" />
<line x1="87.5" y1="189.225" x2="89.5" y2="189.225" stroke="#606060" stroke-width="1" />
<line x1="87.5" y1="198.1375" x2="89.5" y2="198.1375" stroke="#606060" stroke-width="1" />
<line x1="87.5" y1="215.96249999999998" x2="89.5" y2="215.96249999999998" stroke="#606060" stroke-width="1" />
<line x1="87.5" y1="224.875" x2="89.5" y2="224.875" stroke="#606060" stroke-width="1" />
<line x1="87.5" y1="233.7875" x2="89.5" y2="233.7875" stroke="#606060" stroke-width="1" />
<line x1="87.5" y1="251.6125" x2="89.5" y2="251.6125" stroke="#606060" stroke-width="1" />
<line x1="87.5" y1="260.525" x2="89.5" y2="260.525" stroke="#606060" stroke-width="1" />
<line x1="87.5" y1="269.4375" x2="89.5" y2="269.4375" stroke="#606060" stroke-width="1" />
<line x1="87.5" y1="287.2625" x2="89.5" y2="287.2625" stroke="#606060" stroke-width="1" />
<line x1="87.5" y1="296.17499999999995" x2="89.5" y2="296.17499999999995" stroke="#606060" stroke-width="1" />
<line x1="87.5" y1="305.0875" x2="89.5" y2="305.0875" stroke="#606060" stroke-width="1" />
<line x1="87.5" y1="322.9125" x2="89.5" y2="322.9125" stroke="#606060" stroke-width="1" />
<line x1="87.5" y1="331.825" x2="89.5" y2="331.825" stroke="#606060" stroke-width="1" />
<line x1="87.5" y1="340.73749999999995" x2="89.5" y2="340.73749999999995" stroke="#606060" stroke-width="1" />
<line x1="87.5" y1="358.5625" x2="89.5" y2="358.5625" stroke="#606060" stroke-width="1" />
<line x1="87.5" y1="367.475" x2="89.5" y2="367.475" stroke="#606060" stroke-width="1" />
<line x1="87.5" y1="376.3875" x2="89.5" y2="376.3875" stroke="#606060" stroke-width="1" />
<line x1="87.5" y1="394.2125" x2="89.5" y2="394.2125" stroke="#606060" stroke-width="1" />
<line x1="87.5" y1="403.125" x2="89.5" y2="403.125" stroke="#606060" stroke-width="1" />
<line x1="90.0" y1="410.0" x2="90.0" y2="412.5" stroke="#505050" stroke-width="1" />
<line x1="103.925" y1="410.0" x2="103.925" y2="412.0" stroke="#505050" stroke-width="1" />
<line x1="117.85" y1="410.0" x2="117.85" y2="412.0" stroke="#505050" stroke-width="1" />
<line x1="131.775" y1="410.0" x2="131.775" y2="412.0" stroke="#505050" stroke-width="1" />
<line x1="145.7" y1="410.0" x2="145.7" y2="412.5" stroke="#505050" stroke-width="1" />
<line x1="159.625" y1="410.0" x2="159.625" y2="412.0" stroke="#505050" stroke-width="1" />
<line x1="173.55" y1="410.0" x2="173.55" y2="412.0" stroke="#505050" stroke-width="1" />
<line x1="187.47500000000002" y1="410.0" x2="187.47500000000002" y2="412.0" stroke="#505050" stroke-width="1" />
<line x1="201.4" y1="410.0" x2="201.4" y2="412.5" stroke="#505050" stroke-width="1" />
<line x1="215.325" y1="410.0" x2="215.325" y2="412.0" stroke="#505050" stroke-width="1" />
<line x1="229.25" y1="410.0" x2="229.25" y2="412.0" stroke="#505050" stroke-width="1" />
<line x1="243.175" y1="410.0" x2="243.175" y2="412.0" stroke="#505050" stroke-width="1" />
<line x1="257.1" y1="410.0" x2="257.1" y2="412.5" stroke="#505050" stroke-width="1" />
<line x1="271.025" y1="410.0" x2="271.025" y2="412.0" stroke="#505050" stroke-width="1" />
<line x1="284.95000000000005" y1="410.0" x2="284.95000000000005" y2="412.0" stroke="#505050" stroke-width="1" />
<line x1="298.875" y1="410.0" x2="298.875" y2="412.0" stroke="#505050" stroke-width="1" />
<line x1="312.8" y1="410.0" x2="312.8" y2="412.5" stroke="#505050" stroke-width="1" />
<line x1="326.725" y1="410.0" x2="326.725" y2="412.0" stroke="#505050" stroke-width="1" />
<line x1="340.65" y1="410.0" x2="340.65" y2="412.0" stroke="#505050" stroke-width="1" />
<line x1="354.575" y1="410.0" x2="354.575" y2="412.0" stroke="#505050" stroke-width="1" />
<line x1="368.5" y1="410.0" x2="368.5" y2="412.5" stroke="#505050" stroke-width="1" />
<line x1="382.425" y1="410.0" x2="382.425" y2="412.0" stroke="#505050" stroke-width="1" />
<line x1="396.35" y1="410.0" x2="396.35" y2="412.0" stroke="#505050" stroke-width="1" />
<line x1="410.27500000000003" y1="410.0" x2="410.27500000000003" y2="412.0" stroke="#505050" stroke-width="1" />
<text x="90.0" y="422" font-size="9" fill="#000" text-anchor="middle" font-weight="normal" >0</text>
<text x="145.7" y="422" font-size="9" fill="#000" text-anchor="middle" font-weight="normal" >20</text>
<text x="201.4" y="422" font-size="9" fill="#000" text-anchor="middle" font-weight="normal" >40</text>
<text x="257.1" y="422" font-size="9" fill="#000" text-anchor="middle" font-weight="normal" >60</text>
<text x="312.8" y="422" font-size="9" fill="#000" text-anchor="middle" font-weight="normal" >80</text>
<text x="368.5" y="422" font-size="9" fill="#000" text-anchor="middle" font-weight="normal" >100</text>
<rect x="435.5" y="87.5" width="156" height="26" stroke="#A28D68" fill="none"/>
<rect x="436.5" y="88.5" width="156" height="26" stroke="#FFFFFF" fill="none"/>
<rect x="439" y="84" width="57" height="6" fill="#D5CCBB" />
<text x="440.7" y="91.5" font-size="9.5" fill="#000" text-anchor="start" font-weight="normal" textLength="54" lengthAdjust="spacingAndGlyphs" >Diagramm-Art:</text>
<circle cx="447" cy="101.3" r="5" fill="#fff"/>
<circle cx="447" cy="101.3" r="4.6" fill="none" stroke="#A28D68" stroke-width=".8" stroke-dasharray="0 3.6 14.5 20"/>
<path d="M444.1,104.2A4.1,4.1 0 0 1 449.9,98.39999999999999" stroke="#000" fill="none" stroke-width=".9"/>
<text x="455" y="104.5" font-size="9.5" fill="#000" text-anchor="start" font-weight="normal" textLength="18" lengthAdjust="spacingAndGlyphs" >Kreis</text>
<circle cx="491" cy="101.3" r="5" fill="#fff"/>
<circle cx="491" cy="101.3" r="4.6" fill="none" stroke="#A28D68" stroke-width=".8" stroke-dasharray="0 3.6 14.5 20"/>
<path d="M488.1,104.2A4.1,4.1 0 0 1 493.9,98.39999999999999" stroke="#000" fill="none" stroke-width=".9"/>
<text x="499.5" y="104.5" font-size="9.5" fill="#000" text-anchor="start" font-weight="normal" textLength="24.5" lengthAdjust="spacingAndGlyphs" >Säulen</text>
<circle cx="541" cy="101.3" r="5" fill="#fff"/>
<circle cx="541" cy="101.3" r="4.6" fill="none" stroke="#A28D68" stroke-width=".8" stroke-dasharray="0 3.6 14.5 20"/>
<path d="M538.1,104.2A4.1,4.1 0 0 1 543.9,98.39999999999999" stroke="#000" fill="none" stroke-width=".9"/>
<circle cx="541" cy="101.3" r="1.7" fill="#000"/>
<text x="549.7" y="104.5" font-size="9.5" fill="#000" text-anchor="start" font-weight="normal" textLength="24.3" lengthAdjust="spacingAndGlyphs" >Balken</text>
<rect x="435.5" y="116.5" width="156" height="37" stroke="#A28D68" fill="none"/>
<rect x="436.5" y="117.5" width="156" height="37" stroke="#FFFFFF" fill="none"/>
<circle cx="447" cy="129.3" r="5" fill="#fff"/>
<circle cx="447" cy="129.3" r="4.6" fill="none" stroke="#A28D68" stroke-width=".8" stroke-dasharray="0 3.6 14.5 20"/>
<path d="M444.1,132.20000000000002A4.1,4.1 0 0 1 449.9,126.4" stroke="#000" fill="none" stroke-width=".9"/>
<circle cx="447" cy="129.3" r="1.7" fill="#000"/>
<text x="455.5" y="132.5" font-size="9.5" fill="#000" text-anchor="start" font-weight="normal" textLength="65" lengthAdjust="spacingAndGlyphs" >Prozent anzeigen</text>
<circle cx="447" cy="141.3" r="5" fill="#fff"/>
<circle cx="447" cy="141.3" r="4.6" fill="none" stroke="#A28D68" stroke-width=".8" stroke-dasharray="0 3.6 14.5 20"/>
<path d="M444.1,144.20000000000002A4.1,4.1 0 0 1 449.9,138.4" stroke="#000" fill="none" stroke-width=".9"/>
<text x="455.5" y="144.5" font-size="9.5" fill="#000" text-anchor="start" font-weight="normal" textLength="61.2" lengthAdjust="spacingAndGlyphs" >Anzahl anzeigen</text>
<text x="439.3" y="171" font-size="9.5" fill="#000" text-anchor="start" font-weight="normal" textLength="20.7" lengthAdjust="spacingAndGlyphs" >Unter</text>
<rect x="467" y="160" width="15" height="16" fill="#FFFFFF" />
<path d="M467.5,175.5V160.5H481.5" stroke="#A28D68" fill="none"/>
<path d="M467.5,175.5H481.5V160.5" stroke="#FFFFFF" fill="none"/>
<path d="M468.5,174.5V161.5H480.5" stroke="#000000" fill="none"/>
<path d="M468.5,174.5H480.5V161.5" stroke="#EAE6DD" fill="none"/>
<text x="478.6" y="171.3" font-size="10.5" fill="#000" text-anchor="end" font-weight="normal" >3</text>
<rect x="483" y="159" width="10" height="8" fill="#D5CCBB" />
<path d="M483.5,166.5V159.5H492.5" stroke="#EAE6DD" fill="none"/>
<path d="M483.5,166.5H492.5V159.5" stroke="#000000" fill="none"/>
<rect x="483" y="167" width="10" height="8" fill="#D5CCBB" />
<path d="M483.5,174.5V167.5H492.5" stroke="#EAE6DD" fill="none"/>
<path d="M483.5,174.5H492.5V167.5" stroke="#000000" fill="none"/>
<path d="M486,164.5H490L488,162.5Z" fill="#000"/>
<path d="M486,170.5H490L488,172.5Z" fill="#000"/>
<text x="495.7" y="171" font-size="9.5" fill="#000" text-anchor="start" font-weight="normal" textLength="64.3" lengthAdjust="spacingAndGlyphs" >zusammenfassen</text>
<rect x="435.5" y="182.5" width="156" height="103" stroke="#A28D68" fill="none"/>
<rect x="436.5" y="183.5" width="156" height="103" stroke="#FFFFFF" fill="none"/>
<circle cx="447" cy="194.3" r="5" fill="#fff"/>
<circle cx="447" cy="194.3" r="4.6" fill="none" stroke="#A28D68" stroke-width=".8" stroke-dasharray="0 3.6 14.5 20"/>
<path d="M444.1,197.20000000000002A4.1,4.1 0 0 1 449.9,191.4" stroke="#000" fill="none" stroke-width=".9"/>
<circle cx="447" cy="194.3" r="1.7" fill="#000"/>
<text x="455.5" y="197.7" font-size="9.5" fill="#000" text-anchor="start" font-weight="normal" textLength="67.6" lengthAdjust="spacingAndGlyphs" >Aufnahme-Geräte</text>
<circle cx="447" cy="208.3" r="5" fill="#fff"/>
<circle cx="447" cy="208.3" r="4.6" fill="none" stroke="#A28D68" stroke-width=".8" stroke-dasharray="0 3.6 14.5 20"/>
<path d="M444.1,211.20000000000002A4.1,4.1 0 0 1 449.9,205.4" stroke="#000" fill="none" stroke-width=".9"/>
<text x="455.5" y="211.39999999999998" font-size="9.5" fill="#000" text-anchor="start" font-weight="normal" textLength="34.8" lengthAdjust="spacingAndGlyphs" >Bild-Infos</text>
<circle cx="447" cy="221.8" r="5" fill="#fff"/>
<circle cx="447" cy="221.8" r="4.6" fill="none" stroke="#A28D68" stroke-width=".8" stroke-dasharray="0 3.6 14.5 20"/>
<path d="M444.1,224.70000000000002A4.1,4.1 0 0 1 449.9,218.9" stroke="#000" fill="none" stroke-width=".9"/>
<text x="455.5" y="225.1" font-size="9.5" fill="#000" text-anchor="start" font-weight="normal" textLength="54.8" lengthAdjust="spacingAndGlyphs" >Bild-Qualitäten</text>
<circle cx="447" cy="235.8" r="5" fill="#fff"/>
<circle cx="447" cy="235.8" r="4.6" fill="none" stroke="#A28D68" stroke-width=".8" stroke-dasharray="0 3.6 14.5 20"/>
<path d="M444.1,238.70000000000002A4.1,4.1 0 0 1 449.9,232.9" stroke="#000" fill="none" stroke-width=".9"/>
<text x="455.5" y="238.79999999999998" font-size="9.5" fill="#000" text-anchor="start" font-weight="normal" textLength="37.1" lengthAdjust="spacingAndGlyphs" >Ton-Infos</text>
<circle cx="447" cy="249.3" r="5" fill="#fff"/>
<circle cx="447" cy="249.3" r="4.6" fill="none" stroke="#A28D68" stroke-width=".8" stroke-dasharray="0 3.6 14.5 20"/>
<path d="M444.1,252.20000000000002A4.1,4.1 0 0 1 449.9,246.4" stroke="#000" fill="none" stroke-width=".9"/>
<text x="455.5" y="252.5" font-size="9.5" fill="#000" text-anchor="start" font-weight="normal" textLength="57" lengthAdjust="spacingAndGlyphs" >Ton-Qualitäten</text>
<circle cx="447" cy="262.8" r="5" fill="#fff"/>
<circle cx="447" cy="262.8" r="4.6" fill="none" stroke="#A28D68" stroke-width=".8" stroke-dasharray="0 3.6 14.5 20"/>
<path d="M444.1,265.7A4.1,4.1 0 0 1 449.9,259.90000000000003" stroke="#000" fill="none" stroke-width=".9"/>
<text x="455.5" y="266.2" font-size="9.5" fill="#000" text-anchor="start" font-weight="normal" textLength="76.4" lengthAdjust="spacingAndGlyphs" >Aufnahme-Optionen</text>
<circle cx="447" cy="276.8" r="5" fill="#fff"/>
<circle cx="447" cy="276.8" r="4.6" fill="none" stroke="#A28D68" stroke-width=".8" stroke-dasharray="0 3.6 14.5 20"/>
<path d="M444.1,279.7A4.1,4.1 0 0 1 449.9,273.90000000000003" stroke="#000" fill="none" stroke-width=".9"/>
<text x="455.5" y="279.9" font-size="9.5" fill="#000" text-anchor="start" font-weight="normal" textLength="79.9" lengthAdjust="spacingAndGlyphs" >LongPlay-Aufnahmen</text>
<rect x="455.5" y="188.5" width="68" height="11" stroke="#000" stroke-dasharray="1 1.2" fill="none"/>
<rect x="435.5" y="285.5" width="156" height="141" stroke="#A28D68" fill="none"/>
<rect x="436.5" y="286.5" width="156" height="141" stroke="#FFFFFF" fill="none"/>
<circle cx="447" cy="293.3" r="5" fill="#fff"/>
<circle cx="447" cy="293.3" r="4.6" fill="none" stroke="#A28D68" stroke-width=".8" stroke-dasharray="0 3.6 14.5 20"/>
<path d="M444.1,296.2A4.1,4.1 0 0 1 449.9,290.40000000000003" stroke="#000" fill="none" stroke-width=".9"/>
<circle cx="447" cy="293.3" r="1.7" fill="#000"/>
<text x="455.5" y="296.5" font-size="9.5" fill="#000" text-anchor="start" font-weight="normal" textLength="93.4" lengthAdjust="spacingAndGlyphs" >Gesamt (Alle Kategorien)</text>
<circle cx="447" cy="308.8" r="5" fill="#fff"/>
<circle cx="447" cy="308.8" r="4.6" fill="none" stroke="#A28D68" stroke-width=".8" stroke-dasharray="0 3.6 14.5 20"/>
<path d="M444.1,311.7A4.1,4.1 0 0 1 449.9,305.90000000000003" stroke="#000" fill="none" stroke-width=".9"/>
<text x="455.5" y="312" font-size="9.5" fill="#000" text-anchor="start" font-weight="normal" textLength="112.6" lengthAdjust="spacingAndGlyphs" >Nur die folgenden Kategorien:</text>
<path d="M439.5,422V316.5H590" stroke="#A28D68" fill="none"/>
<path d="M440.5,421V317.5H589" stroke="#000" fill="none"/>
<path d="M439,422.5H590.5V316" stroke="#fff" fill="none"/>
<path d="M440,421.5H589.5V317" stroke="#EAE6DD" fill="none"/>
<clipPath id="lc"><rect x="441" y="318" width="137" height="103"/></clipPath>
<g clip-path="url(#lc)">
<rect x="441" y="318.0" width="137" height="18.9" fill="#D5CCBB" />
<path d="M441.5,336.4V318.5H577.5" stroke="#FFFFFF" fill="none"/>
<path d="M441.5,336.4H577.5V318.5" stroke="#A28D68" fill="none"/>
<text x="460.6" y="330.5" font-size="9.5" fill="#A28D68" text-anchor="start" font-weight="normal" textLength="55.4" lengthAdjust="spacingAndGlyphs" >Sommerurlaub</text>
<path d="M564,329.3L567,332.5L575.5,324.0" stroke="#fff" stroke-width="1.2" fill="none" opacity=".7"/>
<path d="M563,328.0L566.3,331.3L574.5,323.0" stroke="#A28D68" stroke-width="3.3" fill="none"/>
<g transform="translate(444,320.0)"><rect x="0" y="0" width="15.5" height="10.5" fill="#A28D68"/><path d="M1.5,3H14M1.5,7H14" stroke="#EAE6DD" stroke-width="1.2" stroke-dasharray="1.3 1.2" opacity=".8"/><path d="M2,14.5L15,11.5" stroke="#A28D68" stroke-width="2"/><path d="M3,15.5L15,13" stroke="#fff" stroke-width=".7"/></g>
<rect x="441" y="336.9" width="137" height="18.9" fill="#D5CCBB" />
<path d="M441.5,355.3V337.4H577.5" stroke="#FFFFFF" fill="none"/>
<path d="M441.5,355.3H577.5V337.4" stroke="#A28D68" fill="none"/>
<text x="460.6" y="349.4" font-size="9.5" fill="#A28D68" text-anchor="start" font-weight="normal" textLength="49" lengthAdjust="spacingAndGlyphs" >Winterurlaub</text>
<path d="M564,348.2L567,351.4L575.5,342.9" stroke="#fff" stroke-width="1.2" fill="none" opacity=".7"/>
<path d="M563,346.9L566.3,350.2L574.5,341.9" stroke="#A28D68" stroke-width="3.3" fill="none"/>
<g transform="translate(444,338.9)"><rect x="0" y="0" width="15.5" height="10.5" fill="#A28D68"/><path d="M1.5,3H14M1.5,7H14" stroke="#EAE6DD" stroke-width="1.2" stroke-dasharray="1.3 1.2" opacity=".8"/><path d="M2,14.5L15,11.5" stroke="#A28D68" stroke-width="2"/><path d="M3,15.5L15,13" stroke="#fff" stroke-width=".7"/></g>
<rect x="441" y="355.8" width="137" height="18.9" fill="#D5CCBB" />
<path d="M441.5,374.2V356.3H577.5" stroke="#FFFFFF" fill="none"/>
<path d="M441.5,374.2H577.5V356.3" stroke="#A28D68" fill="none"/>
<text x="460.6" y="368.3" font-size="9.5" fill="#A28D68" text-anchor="start" font-weight="normal" textLength="74.6" lengthAdjust="spacingAndGlyphs" >Stadtwerke Dahlem</text>
<path d="M564,367.1L567,370.3L575.5,361.8" stroke="#fff" stroke-width="1.2" fill="none" opacity=".7"/>
<path d="M563,365.8L566.3,369.1L574.5,360.8" stroke="#A28D68" stroke-width="3.3" fill="none"/>
<g transform="translate(444,357.8)"><path d="M0.5,2H4V6.5L8,4.5V6.5L12,4.5V6.5L15.5,4.5V14.5H0.5Z" fill="#A28D68"/><path d="M7,2.5H12" stroke="#A28D68" stroke-width="1"/></g>
<rect x="441" y="374.7" width="137" height="18.9" fill="#D5CCBB" />
<path d="M441.5,393.1V375.2H577.5" stroke="#FFFFFF" fill="none"/>
<path d="M441.5,393.1H577.5V375.2" stroke="#A28D68" fill="none"/>
<text x="460.6" y="387.2" font-size="9.5" fill="#A28D68" text-anchor="start" font-weight="normal" textLength="56.6" lengthAdjust="spacingAndGlyphs" >Dienstl. Reisen</text>
<path d="M564,386.0L567,389.2L575.5,380.7" stroke="#fff" stroke-width="1.2" fill="none" opacity=".7"/>
<path d="M563,384.7L566.3,388.0L574.5,379.7" stroke="#A28D68" stroke-width="3.3" fill="none"/>
<g transform="translate(444,376.7)"><path d="M0,8.2H15.5" stroke="#A28D68" stroke-width="2.2"/><path d="M5,2.5L10,8.2L5,13.9" stroke="#A28D68" stroke-width="2.4" fill="none"/><path d="M1,6L2.5,8.2L1,10.4" stroke="#A28D68" stroke-width="1.6" fill="none"/></g>
<rect x="441" y="393.6" width="137" height="18.9" fill="#D5CCBB" />
<path d="M441.5,412.0V394.1H577.5" stroke="#FFFFFF" fill="none"/>
<path d="M441.5,412.0H577.5V394.1" stroke="#A28D68" fill="none"/>
<text x="460.6" y="406.1" font-size="9.5" fill="#A28D68" text-anchor="start" font-weight="normal" textLength="25.8" lengthAdjust="spacingAndGlyphs" >Familie</text>
<path d="M564,404.9L567,408.1L575.5,399.6" stroke="#fff" stroke-width="1.2" fill="none" opacity=".7"/>
<path d="M563,403.6L566.3,406.9L574.5,398.6" stroke="#A28D68" stroke-width="3.3" fill="none"/>
<g transform="translate(444,395.6)"><circle cx="4.5" cy="5" r="2.2" fill="#A28D68"/><circle cx="10" cy="4.5" r="2.2" fill="#A28D68"/><path d="M0.5,14.5L2,8.5H13L15,14.5Z" fill="#A28D68"/></g>
<rect x="441" y="412.5" width="137" height="18.9" fill="#D5CCBB" />
<path d="M441.5,430.9V413.0H577.5" stroke="#FFFFFF" fill="none"/>
<path d="M441.5,430.9H577.5V413.0" stroke="#A28D68" fill="none"/>
<text x="460.6" y="425.0" font-size="9.5" fill="#A28D68" text-anchor="start" font-weight="normal" textLength="32" lengthAdjust="spacingAndGlyphs" >Freunde</text>
<path d="M564,423.8L567,427.0L575.5,418.5" stroke="#fff" stroke-width="1.2" fill="none" opacity=".7"/>
<path d="M563,422.5L566.3,425.8L574.5,417.5" stroke="#A28D68" stroke-width="3.3" fill="none"/>
<g transform="translate(444,414.5)"><circle cx="4.5" cy="5" r="2.2" fill="#A28D68"/><circle cx="10" cy="4.5" r="2.2" fill="#A28D68"/><path d="M0.5,14.5L2,8.5H13L15,14.5Z" fill="#A28D68"/></g>
</g>
<rect x="578" y="318" width="11" height="103" fill="#EAE6DD" />
<rect x="578" y="318" width="11" height="10" fill="#D5CCBB" />
<path d="M578.5,327.5V318.5H588.5" stroke="#EAE6DD" fill="none"/>
<path d="M578.5,327.5H588.5V318.5" stroke="#000" fill="none"/>
<path d="M579.5,326.5V319.5H587.5" stroke="#fff" fill="none"/>
<path d="M579.5,326.5H587.5V319.5" stroke="#A28D68" fill="none"/>
<rect x="578" y="328" width="11" height="16" fill="#D5CCBB" />
<path d="M578.5,343.5V328.5H588.5" stroke="#EAE6DD" fill="none"/>
<path d="M578.5,343.5H588.5V328.5" stroke="#000" fill="none"/>
<path d="M579.5,342.5V329.5H587.5" stroke="#fff" fill="none"/>
<path d="M579.5,342.5H587.5V329.5" stroke="#A28D68" fill="none"/>
<rect x="578" y="412" width="11" height="10" fill="#D5CCBB" />
<path d="M578.5,421.5V412.5H588.5" stroke="#EAE6DD" fill="none"/>
<path d="M578.5,421.5H588.5V412.5" stroke="#000" fill="none"/>
<path d="M579.5,420.5V413.5H587.5" stroke="#fff" fill="none"/>
<path d="M579.5,420.5H587.5V413.5" stroke="#A28D68" fill="none"/>
<path d="M581,325.5H586L583.5,323Z" fill="#000"/>
<path d="M581,415.5H586L583.5,418Z" fill="#000"/>
<text x="17.5" y="443.3" font-size="9.5" fill="#000" text-anchor="start" font-weight="normal" textLength="52.5" lengthAdjust="spacingAndGlyphs" >Registriert für</text>
<path d="M73.5,447V433.5H213" stroke="#A28D68" fill="none"/>
<path d="M73,446.5H212.5V433" stroke="#FFFFFF" fill="none"/>
<text x="75" y="443.3" font-size="9.5" fill="#000" text-anchor="start" font-weight="normal" textLength="48" lengthAdjust="spacingAndGlyphs" >Bernd Heyer</text>
<text x="228.3" y="443.3" font-size="9.5" fill="#000" text-anchor="start" font-weight="normal" textLength="30" lengthAdjust="spacingAndGlyphs" >Medien:</text>
<path d="M262.5,447V433.5H299" stroke="#A28D68" fill="none"/>
<path d="M262,446.5H298.5V433" stroke="#FFFFFF" fill="none"/>
<text x="274" y="443.3" font-size="9.5" fill="#000" text-anchor="start" font-weight="normal" textLength="13.3" lengthAdjust="spacingAndGlyphs" >116</text>
<text x="311" y="443.3" font-size="9.5" fill="#000" text-anchor="start" font-weight="normal" textLength="17.3" lengthAdjust="spacingAndGlyphs" >Titel:</text>
<path d="M333.0,447V433.5H370" stroke="#A28D68" fill="none"/>
<path d="M332.5,446.5H369.5V433" stroke="#FFFFFF" fill="none"/>
<text x="345" y="443.3" font-size="9.5" fill="#000" text-anchor="start" font-weight="normal" textLength="14.3" lengthAdjust="spacingAndGlyphs" >282</text>
<text x="387.5" y="443.3" font-size="9.5" fill="#000" text-anchor="start" font-weight="normal" textLength="43.5" lengthAdjust="spacingAndGlyphs" >Datenbank:</text>
<path d="M435.5,447V433.5H591" stroke="#A28D68" fill="none"/>
<path d="M435,446.5H590.5V433" stroke="#FFFFFF" fill="none"/>
<text x="437.5" y="443.3" font-size="9.5" fill="#000" text-anchor="start" font-weight="normal" textLength="137.5" lengthAdjust="spacingAndGlyphs" >Test3 (C:\Test-Daten\HVO2-Test3\)</text>
<path d="M596,438L586,448" stroke="none"/>
<path d="M592,438L586,444" stroke="none"/>
<path d="M588,438L586,440" stroke="none"/>
<line x1="596" y1="447" x2="597" y2="446" stroke="#A28D68" stroke-width="1"/>
<line x1="597" y1="447" x2="597" y2="447" stroke="#fff" stroke-width="1"/>
<line x1="592" y1="447" x2="597" y2="442" stroke="#A28D68" stroke-width="1"/>
<line x1="593" y1="447" x2="597" y2="443" stroke="#fff" stroke-width="1"/>
<line x1="588" y1="447" x2="597" y2="438" stroke="#A28D68" stroke-width="1"/>
<line x1="589" y1="447" x2="597" y2="439" stroke="#fff" stroke-width="1"/>
</svg></body></html>
